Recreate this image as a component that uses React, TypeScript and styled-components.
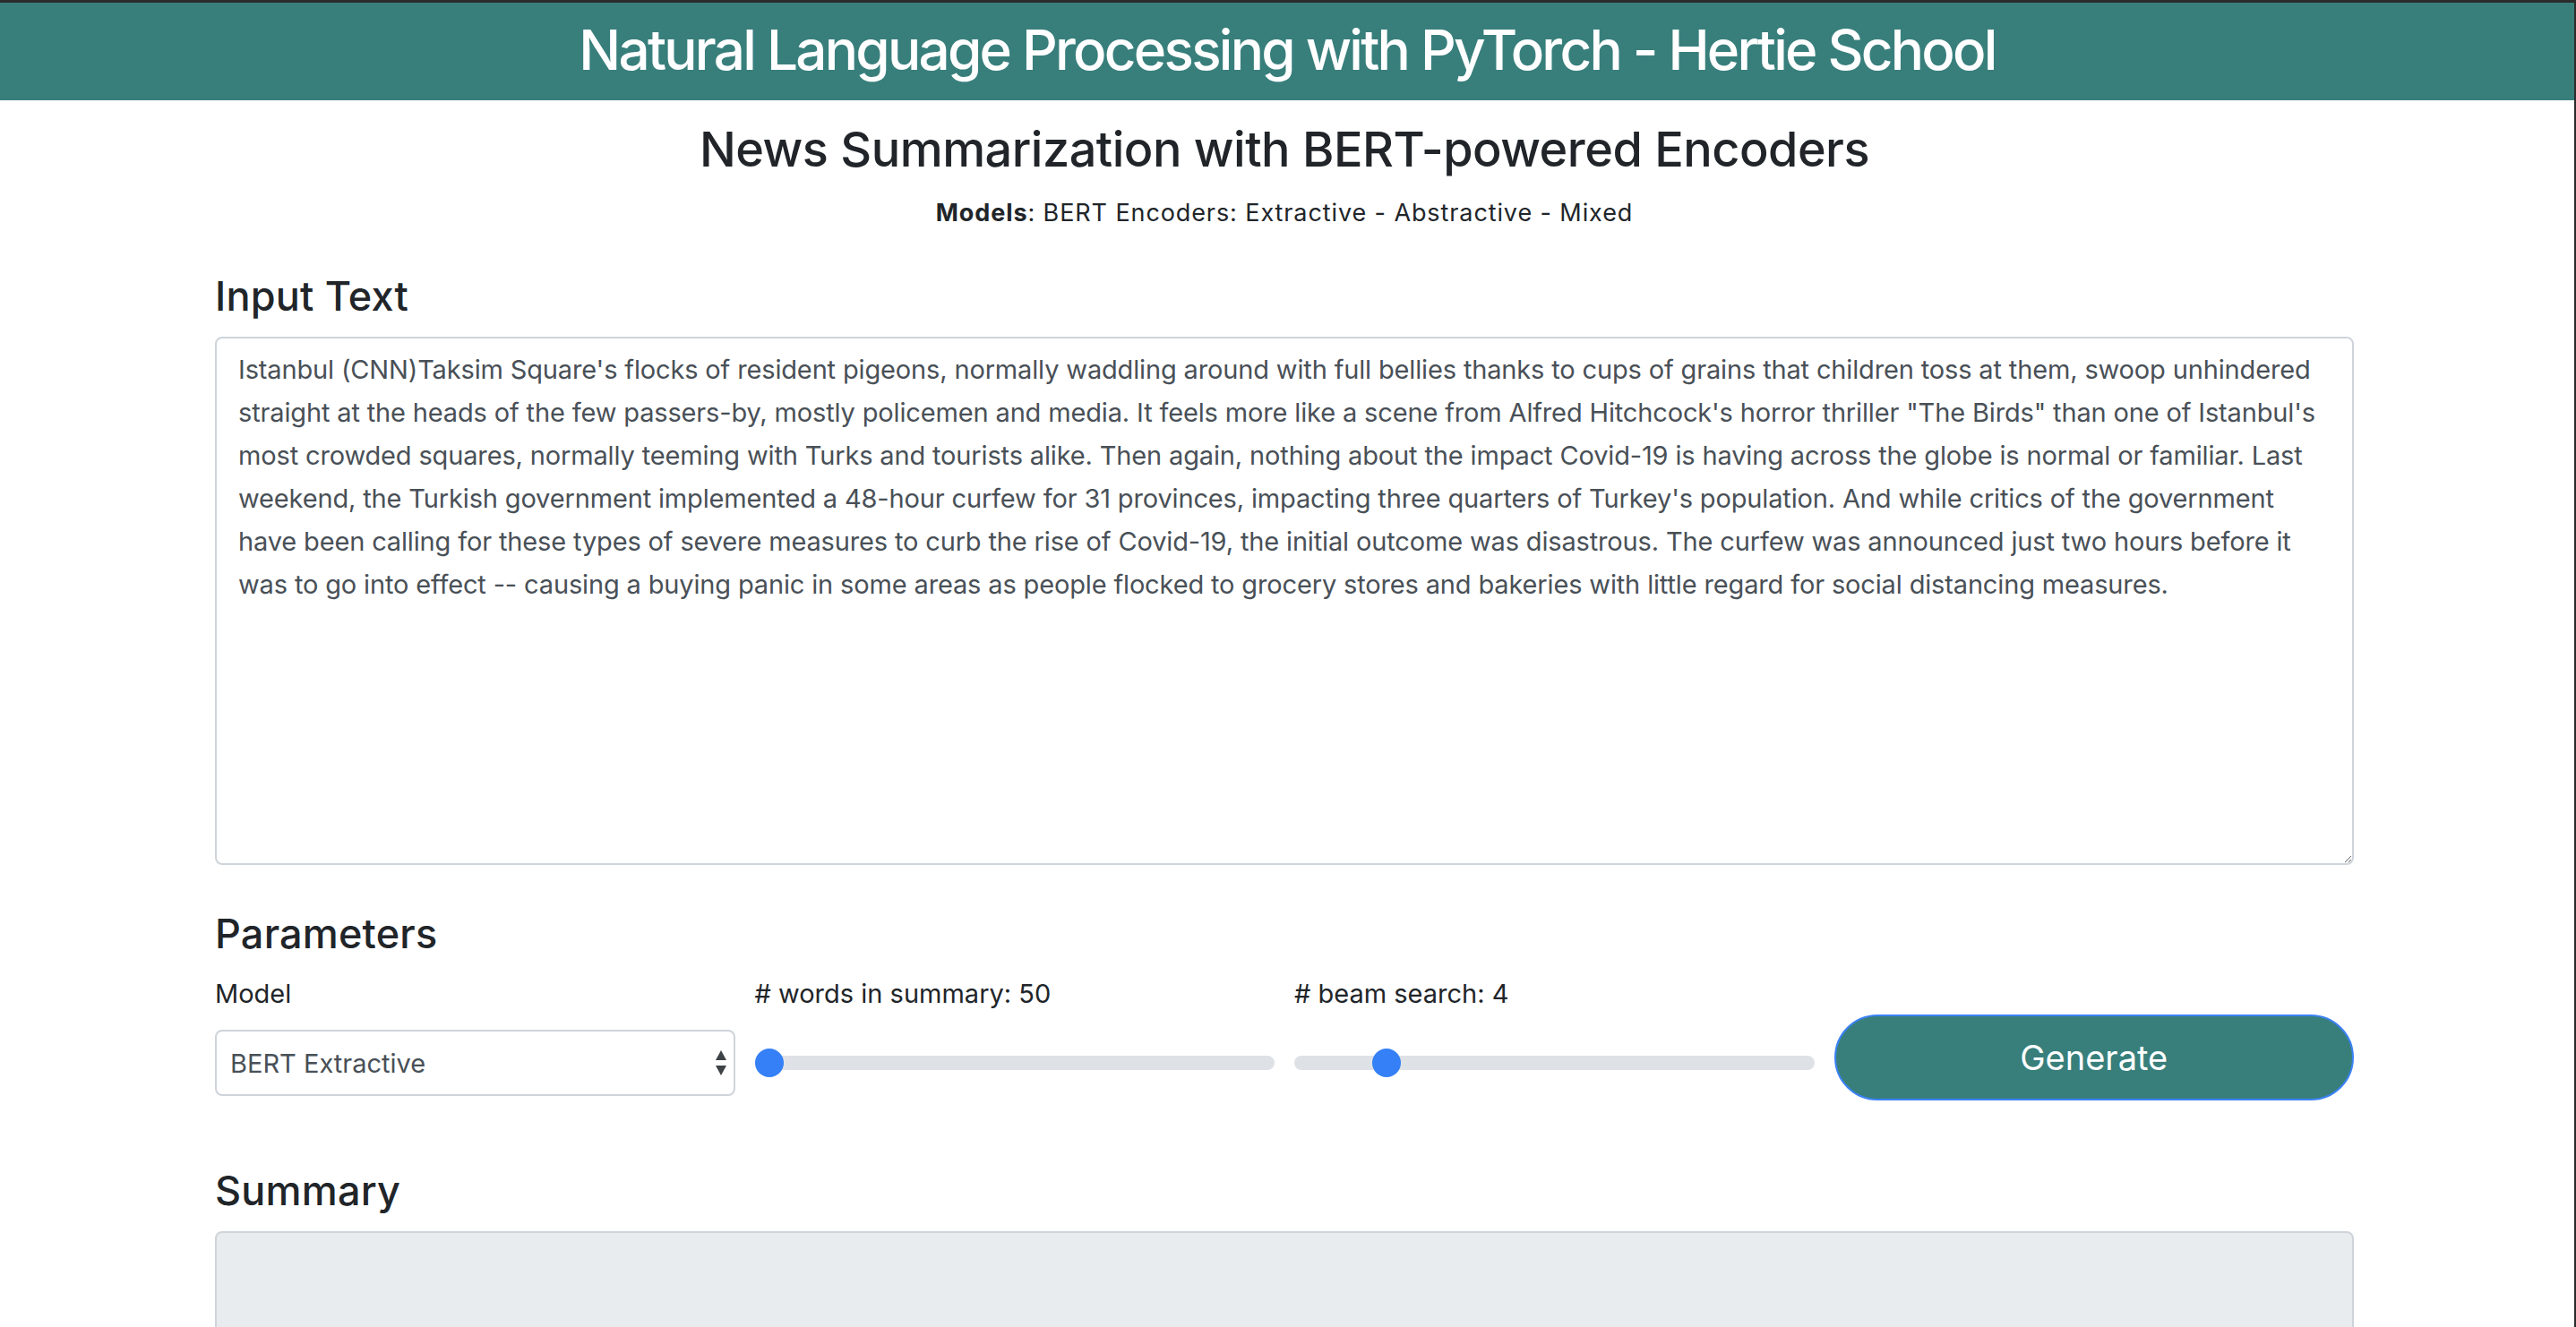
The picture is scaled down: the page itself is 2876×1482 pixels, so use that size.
import React, { useState } from 'react';
import styled, { createGlobalStyle } from 'styled-components';

const GlobalStyle = createGlobalStyle`
  html, body {
    margin: 0;
    padding: 0;
    overflow: hidden;
    background: #ffffff;
  }
  body {
    font-family: Inter, "Liberation Sans", sans-serif;
    color: #212529;
  }
  * {
    box-sizing: border-box;
  }
`;

const Frame = styled.div`
  border-top: 3px solid #2b2b2b;
  border-right: 2px solid #2b2b2b;
  height: 1482px;
  overflow: hidden;
`;

const Header = styled.header`
  background: #387f7c;
  padding: 14px 0 18px;
  text-align: center;
`;

const HeaderTitle = styled.h1`
  margin: 0;
  font-size: 62px;
  line-height: 77px;
  font-weight: 500;
  letter-spacing: -2.75px;
  color: #ffffff;
`;

const Container = styled.main`
  width: 2388px;
  margin: 0 auto;
  position: relative;
  left: -3px;
`;

const PageTitle = styled.h2`
  margin: 21px 0 0;
  font-size: 54px;
  line-height: 67px;
  font-weight: 500;
  letter-spacing: -0.5px;
  text-align: center;
`;

const Subtitle = styled.div`
  margin-top: 20px;
  font-size: 27px;
  line-height: 36px;
  letter-spacing: 0.9px;
  text-align: center;

  b {
    font-weight: 700;
  }
`;

const SectionTitle = styled.h3<{ $top: number; $bottom: number }>`
  margin: ${(p) => p.$top}px 0 ${(p) => p.$bottom}px;
  font-size: 45px;
  line-height: 58px;
  font-weight: 500;
  letter-spacing: 0.2px;
`;

const TextArea = styled.textarea`
  display: block;
  width: 100%;
  height: 590px;
  padding: 11px 24px 12px;
  border: 2px solid #ced4da;
  border-radius: 8px;
  font-family: Inter, "Liberation Sans", sans-serif;
  font-size: 29px;
  line-height: 48px;
  letter-spacing: -0.15px;
  color: #495057;
  resize: vertical;
  outline: none;
  white-space: pre-wrap;
`;

const ParamGrid = styled.div`
  display: grid;
  grid-template-columns: repeat(4, 1fr);
  column-gap: 22px;
`;

const Field = styled.div<{ $pad?: number }>`
  display: flex;
  flex-direction: column;
  padding-top: ${(p) => p.$pad ?? 0}px;
`;

const Label = styled.label`
  display: block;
  font-size: 29px;
  line-height: 48px;
  margin-bottom: 16px;
  color: #212529;
`;

const SelectWrap = styled.div`
  position: relative;
  height: 74px;
`;

const Select = styled.select`
  width: 100%;
  height: 74px;
  padding: 0 40px 0 15px;
  border: 2px solid #ced4da;
  border-radius: 8px;
  background: #ffffff;
  font-family: Inter, "Liberation Sans", sans-serif;
  font-size: 29px;
  color: #495057;
  appearance: none;
  -webkit-appearance: none;
  outline: none;
`;

const SelectArrows = styled.svg`
  position: absolute;
  right: 9px;
  top: 22px;
  pointer-events: none;
`;

const RangeBox = styled.div`
  height: 74px;
  display: flex;
  align-items: center;
`;

const Range = styled.input`
  width: 100%;
  height: 32px;
  margin: 0;
  padding: 0;
  background: transparent;
  -webkit-appearance: none;
  appearance: none;

  &::-webkit-slider-runnable-track {
    height: 16px;
    border-radius: 16px;
    background: #dee2e6;
  }

  &::-webkit-slider-thumb {
    -webkit-appearance: none;
    width: 32px;
    height: 32px;
    margin-top: -8px;
    border: none;
    border-radius: 50%;
    background: #3580f6;
  }
`;

const GenerateButton = styled.button`
  width: 100%;
  height: 96px;
  border: 2px solid #3b82f6;
  border-radius: 48px;
  background: #387f7c;
  color: #ffffff;
  font-family: Inter, "Liberation Sans", sans-serif;
  font-size: 38px;
  cursor: pointer;
`;

const SummaryBox = styled.textarea`
  display: block;
  width: 100%;
  height: 240px;
  padding: 12px 24px;
  border: 2px solid #ced4da;
  border-radius: 8px;
  background: #e9ecef;
  font-family: Inter, "Liberation Sans", sans-serif;
  font-size: 29px;
  line-height: 48px;
  color: #495057;
  resize: none;
`;

const ARTICLE = [
  "Istanbul (CNN)Taksim Square's flocks of resident pigeons, normally waddling around with full bellies thanks to cups of grains that children toss at them, swoop unhindered",
  'straight at the heads of the few passers-by, mostly policemen and media. It feels more like a scene from Alfred Hitchcock\'s horror thriller "The Birds" than one of Istanbul\'s',
  'most crowded squares, normally teeming with Turks and tourists alike. Then again, nothing about the impact Covid-19 is having across the globe is normal or familiar. Last',
  "weekend, the Turkish government implemented a 48-hour curfew for 31 provinces, impacting three quarters of Turkey's population. And while critics of the government",
  'have been calling for these types of severe measures to curb the rise of Covid-19, the initial outcome was disastrous. The curfew was announced just two hours before it',
  'was to go into effect -- causing a buying panic in some areas as people flocked to grocery stores and bakeries with little regard for social distancing measures.',
].join('\n');

const App: React.FC = () => {
  const [text, setText] = useState(ARTICLE);
  const [model, setModel] = useState('extractive');
  const [words, setWords] = useState(50);
  const [beams, setBeams] = useState(4);

  return (
    <>
      <GlobalStyle />
      <Frame>
        <Header>
          <HeaderTitle>Natural Language Processing with PyTorch - Hertie School</HeaderTitle>
        </Header>
        <Container>
          <PageTitle>News Summarization with BERT-powered Encoders</PageTitle>
          <Subtitle>
            <b>Models</b>: BERT Encoders: Extractive - Abstractive - Mixed
          </Subtitle>

          <SectionTitle $top={46} $bottom={16}>Input Text</SectionTitle>
          <TextArea value={text} onChange={(e) => setText(e.target.value)} />

          <SectionTitle $top={48} $bottom={14}>Parameters</SectionTitle>
          <ParamGrid>
            <Field>
              <Label htmlFor="model">Model</Label>
              <SelectWrap>
                <Select id="model" value={model} onChange={(e) => setModel(e.target.value)}>
                  <option value="extractive">BERT Extractive</option>
                  <option value="abstractive">BERT Abstractive</option>
                  <option value="mixed">BERT Mixed</option>
                </Select>
                <SelectArrows width="14" height="30" viewBox="0 0 14 30">
                  <path d="M7 1 L13 12 L1 12 Z" fill="#3d4247" />
                  <path d="M1 18 L13 18 L7 29 Z" fill="#3d4247" />
                </SelectArrows>
              </SelectWrap>
            </Field>

            <Field>
              <Label htmlFor="words"># words in summary: {words}</Label>
              <RangeBox>
                <Range
                  id="words"
                  type="range"
                  min={50}
                  max={500}
                  value={words}
                  onChange={(e) => setWords(Number(e.target.value))}
                />
              </RangeBox>
            </Field>

            <Field>
              <Label htmlFor="beams"># beam search: {beams}</Label>
              <RangeBox>
                <Range
                  id="beams"
                  type="range"
                  min={1}
                  max={20}
                  value={beams}
                  onChange={(e) => setBeams(Number(e.target.value))}
                />
              </RangeBox>
            </Field>

            <Field $pad={47}>
              <GenerateButton type="button">Generate</GenerateButton>
            </Field>
          </ParamGrid>

          <SectionTitle $top={72} $bottom={16}>Summary</SectionTitle>
          <SummaryBox readOnly value="" />
        </Container>
      </Frame>
    </>
  );
};

export default App;
